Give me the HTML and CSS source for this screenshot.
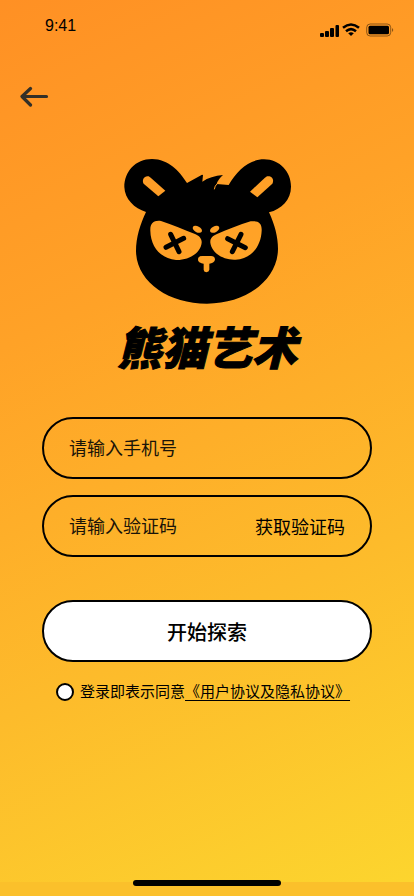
FILE: index.html
```
<!DOCTYPE html>
<html lang="zh-CN">
<head>
    <meta charset="UTF-8">
    <meta name="viewport" content="width=device-width, initial-scale=1.0">
    <title>熊猫艺术</title>
    <link rel="stylesheet" href="styles.css">
</head>
<body>
    <div class="status-bar">
        <span class="time">9:41</span>
        <svg class="status-icons" width="74" height="16" viewBox="0 0 74 16" aria-hidden="true">
            <!-- Signal -->
            <rect x="0" y="11" width="4" height="4" rx="1"/>
            <rect x="5" y="9" width="4" height="6" rx="1"/>
            <rect x="10" y="6" width="4" height="9" rx="1"/>
            <rect x="15.500" y="3" width="3.500" height="12" rx="1"/>
            <!-- Wifi -->
            <g fill="none" stroke="#000" stroke-width="2.500">
                <path d="M23 5.800Q31-0.800 39 5.800"/>
                <path d="M26 9.300Q31 5 36 9.300"/>
            </g>
            <path d="M28.200 11.300Q31 9.300 33.800 11.300L31 14Z"/>
            <!-- Battery -->
            <rect x="46.700" y="2" width="24" height="12" rx="3.500" fill="none" stroke="#000" stroke-opacity=".45"/>
            <rect x="48.500" y="3.800" width="20.500" height="8.400" rx="1.500"/>
            <path d="M72 6Q74.500 8 72 10Z" opacity=".45"/>
        </svg>
    </div>

    <header class="nav">
        <button class="back-button" type="button" aria-label="返回">
            <svg width="30" height="22" viewBox="0 0 30 22">
                <path d="M10.500 2.500 2 10.500l8.500 8.500M2.500 10.500H26.500" fill="none" stroke="#333028" stroke-width="3.200" stroke-linecap="round" stroke-linejoin="round"/>
            </svg>
        </button>
    </header>

    <main class="login">
        <div class="brand">
            <svg class="logo" viewBox="0 0 555 480" aria-hidden="true">
                <defs>
                    <mask id="face">
                        <rect width="555" height="480" fill="#fff"/>
                        <!-- Ears -->
                        <path d="M86 101C79 90 88 76 101 79L108 84 151 122 130 139Z"/>
                        <path d="M472 101C479 88 469 76 456 79L449 84 405 125 427 142Z"/>
                        <!-- Eyes -->
                        <path d="M106 242C105 219 117 210 138 213C172 224 207 239 240 252C253 257 261 267 260 278C257 309 222 331 183 330C139 326 107 292 106 242Z"/>
                        <path d="M440 242C441 219 430 211 407 214C373 224 338 239 306 252C292 257 285 266 286 278C290 309 325 331 362 329C407 327 438 291 440 242Z"/>
                        <!-- Brows -->
                        <ellipse cx="247" cy="238" rx="15" ry="9" transform="rotate(28 247 238)"/>
                        <ellipse cx="299" cy="238" rx="15" ry="9" transform="rotate(-28 299 238)"/>
                        <!-- Nose -->
                        <path d="M249 329C249 315 262 318 274 318C288 318 300 315 300 329C299 336 291 339 283 341V359Q282 366 274 367Q266 366 266 359V341C257 339 249 336 249 329Z"/>
                        <!-- Hair parting -->
                        <path d="M298 118Q299 107 307 101" fill="none" stroke="#000" stroke-width="3"/>
                    </mask>
                </defs>
                <path mask="url(#face)" d="M93 186C58 175 29 147 28 111C28 65 61 27 111 27C161 28 192 62 216 99L261 74 264 75 262 95Q287 78 324 75Q309 88 305 102L341 105C366 62 402 28 447 28C495 28 528 66 528 110C528 149 500 177 462 187C479 224 489 260 489 297C488 390 394 461 276 461C160 461 65 396 63 304C63 261 76 222 93 186Z"/>
                <g fill="none" stroke="#000" stroke-width="15" stroke-linecap="round">
                    <path d="M167 253 192 305M206 265 153 292M378 253 352 305M338 266 391 293"/>
                </g>
            </svg>
            <h1>熊猫艺术</h1>
        </div>

        <form class="login-form">
            <div class="field">
                <input type="tel" placeholder="请输入手机号" aria-label="手机号">
            </div>
            <div class="field">
                <input type="text" placeholder="请输入验证码" aria-label="验证码">
                <button class="code-button" type="button">获取验证码</button>
            </div>
            <button class="submit-button" type="submit">开始探索</button>
            <div class="agreement">
                <input type="radio" id="agree">
                <label for="agree">登录即表示同意</label><a href="#">《用户协议及隐私协议》</a>
            </div>
        </form>
    </main>

    <footer class="home-bar">
        <div class="home-indicator"></div>
    </footer>
</body>
</html>
```

FILE: styles.css
```
* {
    box-sizing: border-box;
}
body {
    font-family: 'Liberation Sans', 'Noto Sans CJK SC', sans-serif;
    display: flex;
    flex-direction: column;
    margin: 0;
    min-height: 100vh;
    background: linear-gradient(155deg, #ff9024 0%, #ffa227 32%, #fdbb2b 66%, #fcd62e 100%);
    color: #000;
}
button, input {
    font-family: inherit;
    color: inherit;
    margin: 0;
}
button {
    cursor: pointer;
}
.status-bar {
    display: flex;
    justify-content: space-between;
    padding: 16px 20px 0 45px;
    height: 44px;
}
.time {
    font-size: 16px;
    line-height: 20px;
}
.status-icons {
    margin-top: 6px;
}
.nav {
    padding: 40px 18px 0;
}
.back-button {
    display: flex;
    padding: 2px;
    border: none;
    background: none;
}
.login {
    flex: 1;
    padding: 40px 42px;
}
.brand {
    display: flex;
    flex-direction: column;
    align-items: center;
}
.logo {
    width: 185px;
}
.brand h1 {
    font-family: 'Noto Sans CJK SC', sans-serif;
    font-size: 45px;
    font-weight: 900;
    font-style: italic;
    line-height: 56px;
    margin: 8px 0 43px;
    -webkit-text-stroke: 1px #000;
}
.login-form {
    display: flex;
    flex-direction: column;
    gap: 16px;
}
.field {
    display: flex;
    align-items: center;
    height: 62px;
    padding: 0 25px;
    border: 2px solid #000;
    border-radius: 31px;
}
.field input {
    flex: 1;
    min-width: 0;
    height: 100%;
    padding: 2px 0 0;
    border: none;
    outline: none;
    background: none;
    font-size: 18px;
}
.field input::placeholder {
    color: #1a1408;
    opacity: 1;
}
.code-button {
    padding: 0;
    border: none;
    background: none;
    font-size: 18px;
}
.submit-button {
    height: 62px;
    margin-top: 27px;
    border: 2px solid #000;
    border-radius: 31px;
    background-color: #fff;
    font-size: 20px;
    font-weight: 500;
}
.agreement {
    display: flex;
    align-items: center;
    margin-top: 2px;
    padding-left: 14px;
    font-size: 15px;
    line-height: 24px;
    white-space: nowrap;
}
.agreement input {
    appearance: none;
    width: 18px;
    height: 18px;
    margin-right: 6px;
    border: 2px solid #000;
    border-radius: 50%;
    background-color: #fff;
}
.agreement input:checked {
    background-color: #000;
}
.agreement a {
    color: inherit;
    text-underline-offset: 3px;
}
.home-bar {
    display: flex;
    justify-content: center;
    height: 14px;
    background-color: #fbc02b;
}
.home-indicator {
    width: 148px;
    height: 6px;
    margin-top: -2px;
    border-radius: 3px;
    background-color: #000;
}
```
